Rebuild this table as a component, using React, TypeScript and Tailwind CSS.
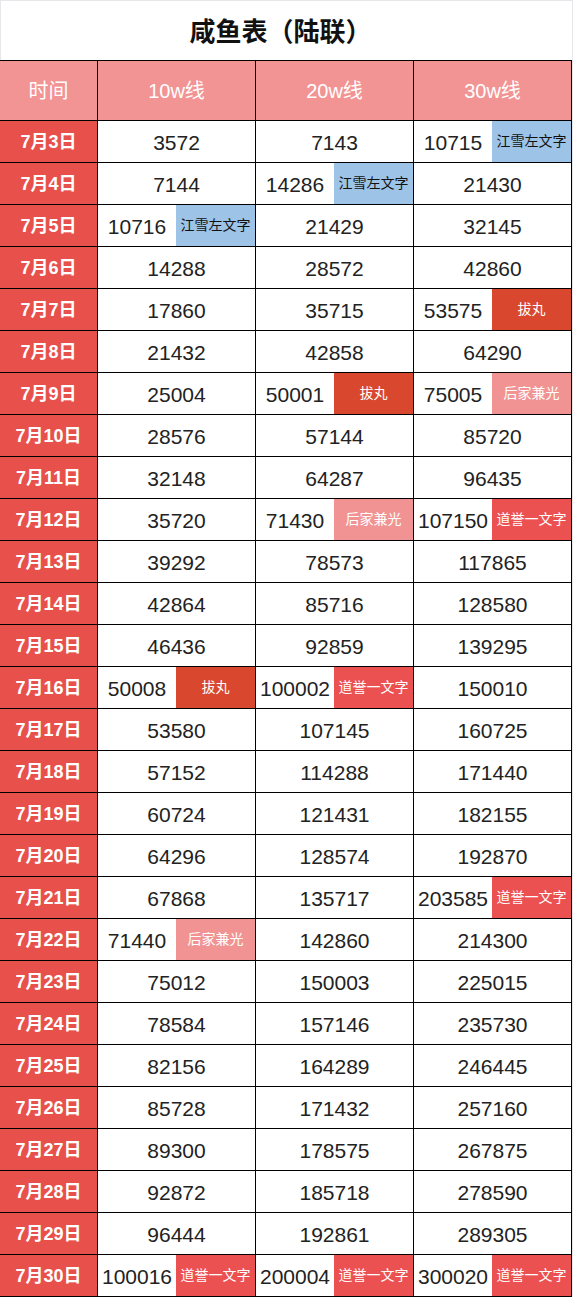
import React from "react"

type Tag = "jx" | "bw" | "hj" | "dy"

// [日期, 10w, 20w, 30w] — 标签写在数值后面
type Cell = [number, Tag?]

const rows: [string, Cell, Cell, Cell][] = [
  ["7月3日", [3572], [7143], [10715, "jx"]],
  ["7月4日", [7144], [14286, "jx"], [21430]],
  ["7月5日", [10716, "jx"], [21429], [32145]],
  ["7月6日", [14288], [28572], [42860]],
  ["7月7日", [17860], [35715], [53575, "bw"]],
  ["7月8日", [21432], [42858], [64290]],
  ["7月9日", [25004], [50001, "bw"], [75005, "hj"]],
  ["7月10日", [28576], [57144], [85720]],
  ["7月11日", [32148], [64287], [96435]],
  ["7月12日", [35720], [71430, "hj"], [107150, "dy"]],
  ["7月13日", [39292], [78573], [117865]],
  ["7月14日", [42864], [85716], [128580]],
  ["7月15日", [46436], [92859], [139295]],
  ["7月16日", [50008, "bw"], [100002, "dy"], [150010]],
  ["7月17日", [53580], [107145], [160725]],
  ["7月18日", [57152], [114288], [171440]],
  ["7月19日", [60724], [121431], [182155]],
  ["7月20日", [64296], [128574], [192870]],
  ["7月21日", [67868], [135717], [203585, "dy"]],
  ["7月22日", [71440, "hj"], [142860], [214300]],
  ["7月23日", [75012], [150003], [225015]],
  ["7月24日", [78584], [157146], [235730]],
  ["7月25日", [82156], [164289], [246445]],
  ["7月26日", [85728], [171432], [257160]],
  ["7月27日", [89300], [178575], [267875]],
  ["7月28日", [92872], [185718], [278590]],
  ["7月29日", [96444], [192861], [289305]],
  ["7月30日", [100016, "dy"], [200004, "dy"], [300020, "dy"]],
]

const tags: Record<Tag, { label: string; cls: string }> = {
  jx: { label: "江雪左文字", cls: "bg-[#9dc3e6] text-[#111]" },
  bw: { label: "拔丸", cls: "bg-[#d9482e] text-white" },
  hj: { label: "后家兼光", cls: "bg-[#f19393] text-white" },
  dy: { label: "道誉一文字", cls: "bg-[#ec5152] text-white" },
}

const font = { fontFamily: '"Liberation Sans", "Noto Sans CJK SC", sans-serif' }

function ValueCell({ cell }: { cell: Cell }) {
  const [value, tag] = cell
  if (!tag) {
    return (
      <div className="flex items-center justify-center border-r border-black pt-0.5 text-[21px] text-[#222]">
        {value}
      </div>
    )
  }
  const t = tags[tag]
  return (
    <div className="flex border-r border-black">
      <div className="flex flex-1 items-center justify-center pt-0.5 text-[21px] text-[#222]">{value}</div>
      <div className={`flex w-[79px] items-center justify-center text-[14px] ${t.cls}`}>{t.label}</div>
    </div>
  )
}

export default function App() {
  return (
    <div className="flex w-[573px] bg-white" style={font}>
      <div className="w-[572px]">
        {/* 标题 */}
        <div className="flex h-[60px] items-center justify-center border-t border-l border-gray-200 pt-1 text-[26px] font-bold text-[#111]">
          <span className="-ml-3">咸鱼表（陆联）</span>
        </div>
        <div className="h-px bg-black" />

        {/* 表头 */}
        <div className="grid h-[60px] grid-cols-[98px_158px_158px_158px] border-b border-black bg-[#f29494] text-[20px] text-white">
          <div className="flex items-center justify-center border-r border-black">时间</div>
          <div className="flex items-center justify-center border-r border-black">10w线</div>
          <div className="flex items-center justify-center border-r border-black">20w线</div>
          <div className="flex items-center justify-center border-r border-black">30w线</div>
        </div>

        {rows.map(([date, a, b, c]) => (
          <div key={date} className="grid h-[42px] grid-cols-[98px_158px_158px_158px] border-b border-black">
            <div className="flex items-center justify-center border-r border-black bg-[#e8514b] pt-0.5 text-[18px] font-bold text-white">
              {date}
            </div>
            <ValueCell cell={a} />
            <ValueCell cell={b} />
            <ValueCell cell={c} />
          </div>
        ))}
      </div>
      <div className="w-px bg-gray-200" />
    </div>
  )
}
